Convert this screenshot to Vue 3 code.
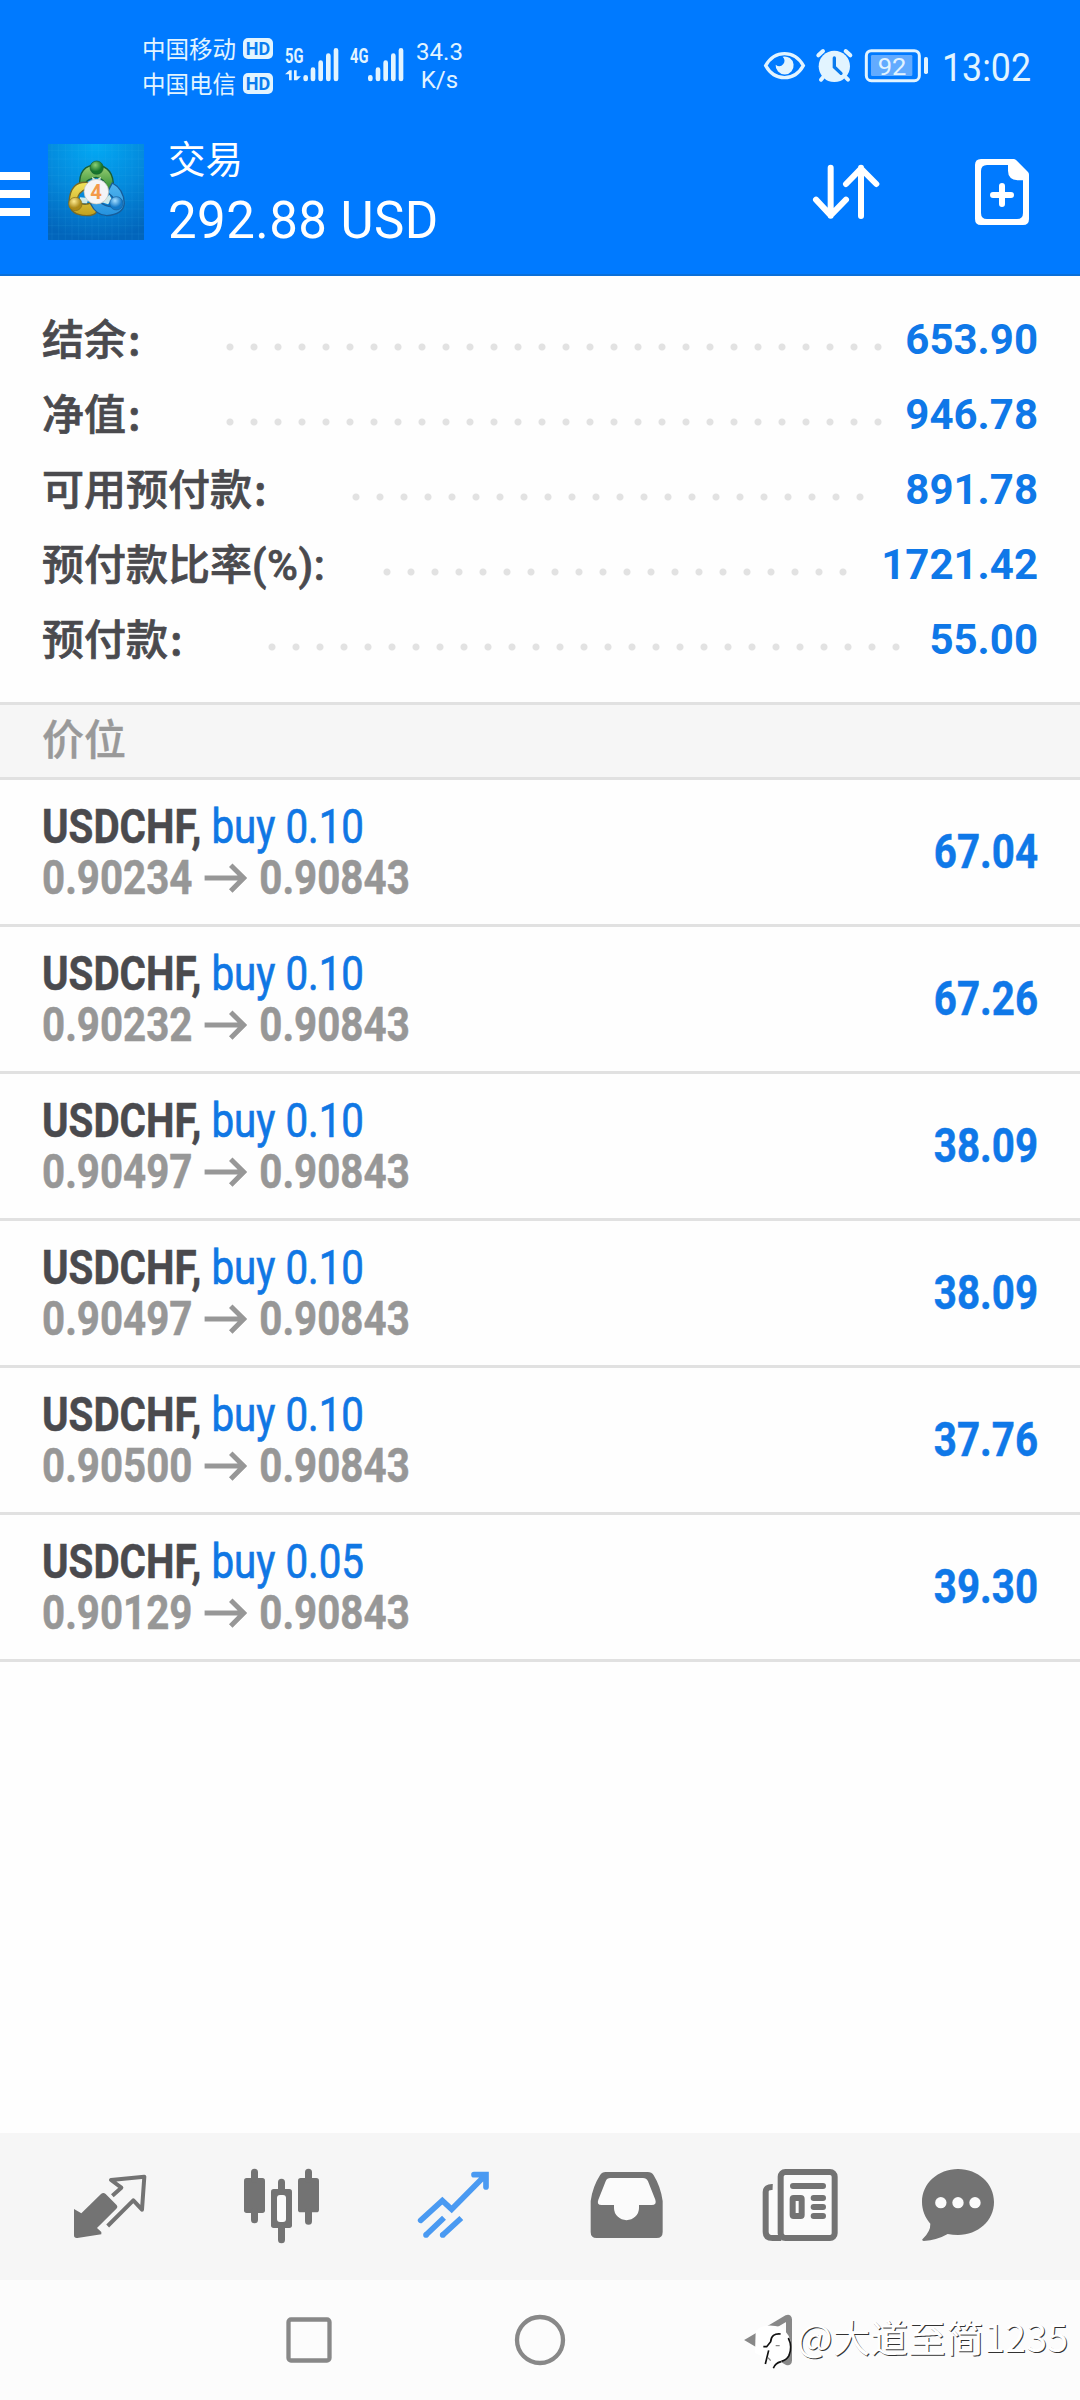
<script setup>
const summary = [
  { label: '结余', suffix: ':', value: '653.90', labelWidth: 176, dots: 28 },
  { label: '净值', suffix: ':', value: '946.78', labelWidth: 176, dots: 28 },
  { label: '可用预付款', suffix: ':', value: '891.78', labelWidth: 302, dots: 22 },
  { label: '预付款比率', suffix: '(%):', value: '1721.42', labelWidth: 333, dots: 20 },
  { label: '预付款', suffix: ':', value: '55.00', labelWidth: 218, dots: 27 },
]
const positions = [
  { volume: '0.10', open: '0.90234', profit: '67.04' },
  { volume: '0.10', open: '0.90232', profit: '67.26' },
  { volume: '0.10', open: '0.90497', profit: '38.09' },
  { volume: '0.10', open: '0.90497', profit: '38.09' },
  { volume: '0.10', open: '0.90500', profit: '37.76' },
  { volume: '0.05', open: '0.90129', profit: '39.30' },
]
</script>

<template>
  <div class="screen">
    <header class="header">
      <div class="status">
        <div class="carriers">
          <div class="carrier"><span>中国移动</span><b class="hd">HD</b></div>
          <div class="carrier"><span>中国电信</span><b class="hd">HD</b></div>
        </div>
        <div class="signal five">
          <span class="gen">5G</span>
          <svg class="sig" viewBox="495 80 162 105" width="54" height="35">
            <path class="data" d="M495 162L508 150H515V180H507V162ZM522 150H530V168H543L531 180H522Z" />
            <g class="bars"><path d="M557 171v5M579 148v28M602 127v49M625 106v70M648 90v86" /></g>
          </svg>
        </div>
        <div class="signal four">
          <span class="gen">4G</span>
          <svg class="sig" viewBox="690 80 162 105" width="54" height="35">
            <g class="bars"><path d="M751 171v5M774 148v28M797 127v49M820 106v70M843 90v86" /></g>
          </svg>
        </div>
        <div class="speed"><span>34.3</span><span>K/s</span></div>
        <svg class="status-icons" viewBox="66 48 504 114" width="168" height="38">
          <path d="M77 107C104 59 163 59 190 107C163 155 104 155 77 107Z" fill="none" stroke="#e2f4ff" stroke-width="10" />
          <path d="M128 80A27 27 0 1 1 107 104Q120 114 130 102Q138 90 128 80Z" fill="#e2f4ff" />
          <circle cx="283" cy="109" r="47" fill="#e2f4ff" />
          <path d="M235 76l14-13M331 76l-14-13M248 143l-5 6M318 143l6 6" stroke="#e2f4ff" stroke-width="12" stroke-linecap="round" />
          <path d="M283 84v27l20 19" fill="none" stroke="#0a7bee" stroke-width="10" stroke-linecap="round" />
          <rect x="379" y="62" width="159" height="90" rx="15" fill="none" stroke="#e2f4ff" stroke-width="9" />
          <rect x="393" y="75" width="124" height="63" rx="4" fill="#62abff" />
          <rect x="552" y="81" width="12" height="51" rx="5" fill="#e2f4ff" />
          <text x="413" y="136" class="battery" textLength="86" lengthAdjust="spacingAndGlyphs">92</text>
        </svg>
        <span class="clock">13:02</span>
      </div>
      <div class="title-row">
        <div class="menu"><i></i><i></i><i></i></div>
        <svg class="logo" viewBox="144 72 288 288" width="96" height="96">
          <defs>
            <radialGradient id="sky" cx=".5" cy="0" r="1"><stop offset="0" stop-color="#03aaf5" /><stop offset=".55" stop-color="#0488db" /><stop offset="1" stop-color="#0265bb" /></radialGradient>
            <linearGradient id="green" x2="0" y2="1"><stop stop-color="#9ed277" /><stop offset="1" stop-color="#27872d" /></linearGradient>
            <linearGradient id="gold" x2="0" y2="1"><stop stop-color="#f2e35b" /><stop offset="1" stop-color="#c1a01d" /></linearGradient>
            <linearGradient id="azure" x2="0" y2="1"><stop stop-color="#52b5ee" /><stop offset="1" stop-color="#2492df" /></linearGradient>
            <radialGradient id="gball" cx=".4" cy=".3"><stop stop-color="#8bd075" /><stop offset="1" stop-color="#16752c" /></radialGradient>
            <radialGradient id="yball" cx=".4" cy=".3"><stop stop-color="#ffec91" /><stop offset="1" stop-color="#ad8a18" /></radialGradient>
            <radialGradient id="bball" cx=".4" cy=".3"><stop stop-color="#a5deff" /><stop offset="1" stop-color="#1479c8" /></radialGradient>
          </defs>
          <path fill="url(#sky)" d="M144 72h288v288H144z" />
          <path d="M156 72v288M176 72v288M196 72v288M216 72v288M236 72v288M256 72v288M276 72v288M296 72v288M316 72v288M336 72v288M356 72v288M376 72v288M396 72v288M416 72v288M144 92h288M144 117h288M144 142h288M144 167h288M144 192h288M144 217h288M144 242h288M144 267h288M144 292h288M144 317h288M144 342h288" stroke="#54bdf0" stroke-opacity=".2" stroke-width="1.5" />
          <path d="M239 198Q236 135 289 135Q342 140 340 202L318 213Q322 178 288 172Q260 178 258 188Z" fill="url(#green)" stroke="#195f36" stroke-width="4" />
          <path d="M263 187Q211 182 207 246Q209 286 260 287Q284 287 291 274L276 248Q246 260 232 241Q232 216 263 205Z" fill="url(#gold)" stroke="#766a27" stroke-width="4" />
          <path d="M337 189Q371 207 373 250Q370 283 320 287Q289 286 272 252L294 241Q314 262 344 260Q352 239 322 217Z" fill="url(#azure)" stroke="#175d9a" stroke-width="4" />
          <path d="M276 170l13 9 14-9-4 20h-20zM240 232l-1 17 22 1 5-16zM328 224l8 15-12 14-18-6z" fill="#effbef" opacity=".85" />
          <circle cx="290" cy="143" r="20" fill="url(#gball)" stroke="#196031" stroke-width="2" />
          <circle cx="226" cy="252" r="20" fill="url(#yball)" stroke="#84701c" stroke-width="2" />
          <circle cx="349" cy="250" r="20" fill="url(#bball)" stroke="#175d9a" stroke-width="2" />
          <circle cx="289" cy="215" r="37" fill="#f4f4f6" stroke="#b9c0b5" stroke-width="2" />
          <text x="288" y="236" class="four-mark">4</text>
        </svg>
        <div class="titles">
          <div class="title">交易</div>
          <div class="total">292.88 USD</div>
        </div>
        <svg class="sort" viewBox="96 102 204 168" width="68" height="56">
          <path d="M152 113v144M108 209l44 47 46-47M243 258V113M198 162l45-46 46 46" fill="none" stroke="#fff" stroke-width="18" stroke-linecap="round" stroke-linejoin="round" />
        </svg>
        <svg class="new" viewBox="582 84 168 204" width="56" height="68">
          <path fill-rule="evenodd" fill="#fff" d="M603 87H700Q705 87 709 91L744 126Q747 129 747 134V267Q747 285 729 285H603Q585 285 585 267V105Q585 87 603 87ZM684 105H621Q603 105 603 123V249Q603 267 621 267H711Q729 267 729 249V151H713Q684 148 684 122Z" />
          <path d="M639 195h54M666 168v54" stroke="#fff" stroke-width="18" stroke-linecap="round" />
        </svg>
      </div>
    </header>

    <section class="summary">
      <div v-for="row in summary" :key="row.label" class="sum-row">
        <span class="label" :style="{ width: row.labelWidth + 'px' }">{{ row.label }}<span :class="row.suffix === ':' ? 'colon' : 'suffix'">{{ row.suffix }}</span></span>
        <i class="leader" :style="{ width: row.dots * 24 + 'px' }"></i>
        <span class="amount">{{ row.value }}</span>
      </div>
    </section>

    <h2 class="band">价位</h2>
    <ul class="positions">
      <li v-for="(p, i) in positions" :key="i" class="position">
        <div class="info">
          <div class="deal"><b>USDCHF,</b><span>buy {{ p.volume }}</span></div>
          <div class="prices">
            <b>{{ p.open }}</b>
            <svg viewBox="612 520 132 90" preserveAspectRatio="none"><path d="M616 565h116M695 527l39 38-39 39" fill="none" stroke="#979797" stroke-width="15" /></svg>
            <b>0.90843</b>
          </div>
        </div>
        <b class="profit">{{ p.profit }}</b>
      </li>
    </ul>

    <nav class="tabs">
      <svg viewBox="-48 39 516 441">
        <path d="M102 267L124 280L183 222Q190 216 197 222L229 254Q235 260 229 266L171 324L184 336V343L112 354Q102 355 102 346Z" />
        <path class="line" d="M217 227L244 203L213 180L313 170L306 269L280 241L203 318" stroke-width="12" />
      </svg>
      <svg viewBox="468 39 516 441">
        <rect x="612" y="174" width="63" height="105" rx="8" /><rect x="774" y="174" width="63" height="103" rx="8" />
        <path d="M701 207H748Q756 207 756 215V316Q756 324 748 324H701Q693 324 693 316V215Q693 207 701 207Z" />
        <path class="line" d="M643.500 157v20M643.500 275v24M805.500 157v20M805.500 275v29M724.500 187v24M724.500 320v39" stroke-width="21" stroke-linecap="round" />
        <path d="M720 225Q711 225 711 234V297Q711 306 720 306H729Q738 306 738 297V234Q738 225 729 225Z" fill="#fbfbfb" />
      </svg>
      <svg class="active" viewBox="984 39 516 441">
        <path class="line" d="M1142 301L1207 242L1235 268L1336 166M1302 164H1338V201" stroke-width="17" stroke-linecap="round" stroke-linejoin="miter" />
        <path class="line" d="M1157 346L1212 293M1207 346L1264 294" stroke-width="17" />
        <circle cx="1158" cy="345" r="8.500" /><circle cx="1208" cy="345" r="8.500" />
      </svg>
      <svg viewBox="-60 39 516 441">
        <path d="M137 156H263Q275 156 281 166Q302 200 308 243V336Q308 354 290 354H110Q92 354 92 336V243Q98 200 120 166Q126 156 137 156Z" />
        <path d="M151 174H249Q259 174 264 184L286 239Q291 255 275 255H237V264A37 36 0 0 1 162 264V255H125Q109 255 115 239L137 184Q141 174 151 174Z" fill="#fbfbfb" />
      </svg>
      <svg viewBox="456 39 516 441">
        <rect x="662" y="156" width="162" height="198" rx="11" fill="#fbfbfb" />
        <rect x="626" y="209" width="27" height="136" fill="#fbfbfb" />
        <path class="line" d="M638 201Q617 200 617 216V335Q617 354 638 354H664" stroke-width="18" />
        <rect class="line" x="662" y="156" width="162" height="198" rx="14" stroke-width="18" />
        <path class="line" d="M699 198h90M761 234h28M761 261h28M761 288h28" stroke-width="18" stroke-linecap="round" />
        <rect class="line" x="698" y="234" width="27" height="54" rx="3" stroke-width="18" />
      </svg>
      <svg viewBox="972 39 516 441">
        <path d="M1194 147C1254 147 1302 190 1302 246S1254 345 1194 345Q1178 345 1163 342Q1132 360 1091 363Q1084 361 1088 357Q1112 334 1111 311C1095 292 1086 270 1086 246C1086 190 1134 147 1194 147Z" />
        <g fill="#fbfbfb"><circle cx="1142.500" cy="248" r="17" /><circle cx="1194" cy="248" r="17" /><circle cx="1245" cy="248" r="17" /></g>
      </svg>
    </nav>

    <div class="system">
      <svg viewBox="0 0 56 56"><rect x="7.500" y="7.500" width="41" height="41" rx="2.500" /></svg>
      <svg viewBox="0 0 56 56"><circle cx="28" cy="28" r="23" /></svg>
      <svg class="back" viewBox="0 0 56 56"><path d="M7 28L44 6Q46 5 46 7.500V48.500Q46 51 44 50Z" /></svg>
      <div class="watermark">
        <svg viewBox="100 140 138 140" width="46" height="46.670">
          <path d="M108 165Q130 138 184 152Q218 180 214 215Q205 250 186 256Q160 280 150 240L135 262L128 240L106 230Z" fill="#fff" />
          <path d="M183 173Q155 170 153 196L141 211H131M147 222L137 263M206 185Q219 210 208 238Q200 252 185 255M184 256Q166 261 161 276" fill="none" stroke="#111" stroke-width="5" />
          <path d="M168 208h12M145 244l8 9" stroke="#888" stroke-width="4" />
        </svg>
        <span>@大道至简1235</span>
      </div>
    </div>
  </div>
</template>

<style>
body { margin: 0; background: #fff; }
</style>

<style scoped>
.screen { width: 1080px; height: 2400px; display: flex; flex-direction: column; background: #fefefe; overflow: hidden; font-family: Roboto, "Noto Sans CJK SC", sans-serif; }
.header { height: 276px; box-sizing: border-box; background: #007aff; border-bottom: 2px solid #0b6fd8; color: #fff; }
.status { height: 132px; display: flex; align-items: flex-start; color: #e2f4ff; }
.carriers { margin: 31px 0 0 142px; width: 143px; }
.carrier { height: 35px; display: flex; align-items: center; font: 23.500px/35px "Noto Sans CJK SC", sans-serif; }
.hd { box-sizing: border-box; margin-left: 7px; width: 30px; height: 21px; border-radius: 5px; background: #e2f4ff; color: #087bee; font: 700 18px/21px Roboto, sans-serif; text-align: center; }
.signal { position: relative; width: 54px; margin-top: 47px; }
.four { margin-left: 11px; }
.sig { display: block; }
.gen { position: absolute; left: 0; top: -1px; font: 700 21px/21px Roboto, sans-serif; transform: scaleX(.7); transform-origin: 0 0; }
.data { fill: #e2f4ff; }
.bars { stroke: #e2f4ff; stroke-width: 14; stroke-linecap: round; }
.speed { margin: 38px 0 0 8px; width: 55px; display: flex; flex-direction: column; align-items: center; font-size: 24px; line-height: 28px; }
.status-icons { flex: none; margin: 46px 0 0 295px; }
.battery { font: 70px Roboto, sans-serif; fill: #e2f4ff; }
.clock { margin: 47px 0 0 12px; font-size: 38px; line-height: 42px; transform: scaleX(.94); transform-origin: 0 0; }
.title-row { height: 142px; display: flex; align-items: flex-start; }
.menu { width: 30px; margin: 40px 18px 0 0; display: flex; flex-direction: column; gap: 10px; }
.menu i { height: 8px; background: #fff; }
.logo { margin-top: 12px; }
.four-mark { font: 700 61px Roboto, sans-serif; fill: #f39a4a; text-anchor: middle; }
.titles { width: 300px; margin: 1px 0 0 24px; }
.title { font: 37.500px/48px "Noto Sans CJK SC", sans-serif; }
.total { margin-top: 10px; font-size: 51px; line-height: 60px; letter-spacing: .45px; white-space: nowrap; }
.sort { margin: 32px 0 0 344px; }
.new { margin: 26px 0 0 94px; }

.summary { box-sizing: border-box; height: 426px; padding: 26px 42px 0 42px; }
.sum-row { height: 75px; display: flex; align-items: center; }
.label { flex: none; height: 75px; font: 500 42px/70px "Noto Sans CJK SC", sans-serif; color: #4a4a4e; -webkit-text-stroke: .7px #4a4a4e; white-space: nowrap; }
.suffix { font-family: Roboto, sans-serif; letter-spacing: .5px; }
.colon { margin-left: 2px; }
.leader { flex: none; height: 8px; margin-top: 15px; background: radial-gradient(circle, #e2e2e2 3px, transparent 4px) 0 0 / 24px 8px repeat-x; }
.amount { margin-left: auto; font-weight: 700; font-size: 42px; line-height: 75px; color: #0f78e8; }
.band { box-sizing: border-box; height: 78px; margin: 0; padding-left: 42px; border-top: 3px solid #e1e1e1; border-bottom: 3px solid #e1e1e1; background: #f6f6f6; color: #999; font: 500 42px/63px "Noto Sans CJK SC", sans-serif; -webkit-text-stroke: .4px #999; }
.positions { margin: 0; padding: 0; list-style: none; }
.position { box-sizing: border-box; height: 147px; padding: 0 42px; display: flex; justify-content: space-between; border-bottom: 3px solid #e1e1e1; }
.info { padding-top: 21px; }
.deal, .prices { height: 51px; font-size: 48px; line-height: 51px; white-space: nowrap; transform: scaleX(.84); transform-origin: 0 0; }
.deal b { color: #4a4a4e; -webkit-text-stroke: .5px #4a4a4e; }
.deal span { margin-left: 12px; color: #1077e4; -webkit-text-stroke: .7px #1077e4; }
.prices { display: flex; align-items: center; color: #979797; -webkit-text-stroke: .5px #979797; }
.prices svg { width: 52px; height: 30px; margin: 1px 14.500px 0 13px; }
.profit { font-size: 48px; line-height: 144px; color: #0f78e8; -webkit-text-stroke: .5px #0f78e8; transform: scaleX(.84); transform-origin: 100% 0; }

.tabs { margin-top: auto; height: 147px; padding-left: 24px; display: flex; background: #f6f6f6; }
.tabs svg { width: 172px; height: 147px; fill: #737373; }
.tabs .line { fill: none; stroke: #737373; stroke-linejoin: round; }
.tabs .active { fill: #4a9af2; }
.tabs .active .line { stroke: #4a9af2; stroke-linejoin: miter; }
.system { position: relative; height: 120px; background: #fcfcfc; display: flex; align-items: center; padding-left: 281px; gap: 175px; }
.system > svg { width: 56px; height: 56px; fill: none; stroke: #888; stroke-width: 4.300; }
.system > .back { stroke-width: 6; }
.watermark { position: absolute; left: 753px; top: 22px; display: flex; align-items: center; color: #fff; }
.watermark svg { margin-top: 21px; }
.watermark span { margin-left: -2px; font: 37.500px/56px "Noto Sans CJK SC", sans-serif; letter-spacing: .3px; white-space: nowrap; text-shadow: 1px 1px 0 #333; }
</style>
